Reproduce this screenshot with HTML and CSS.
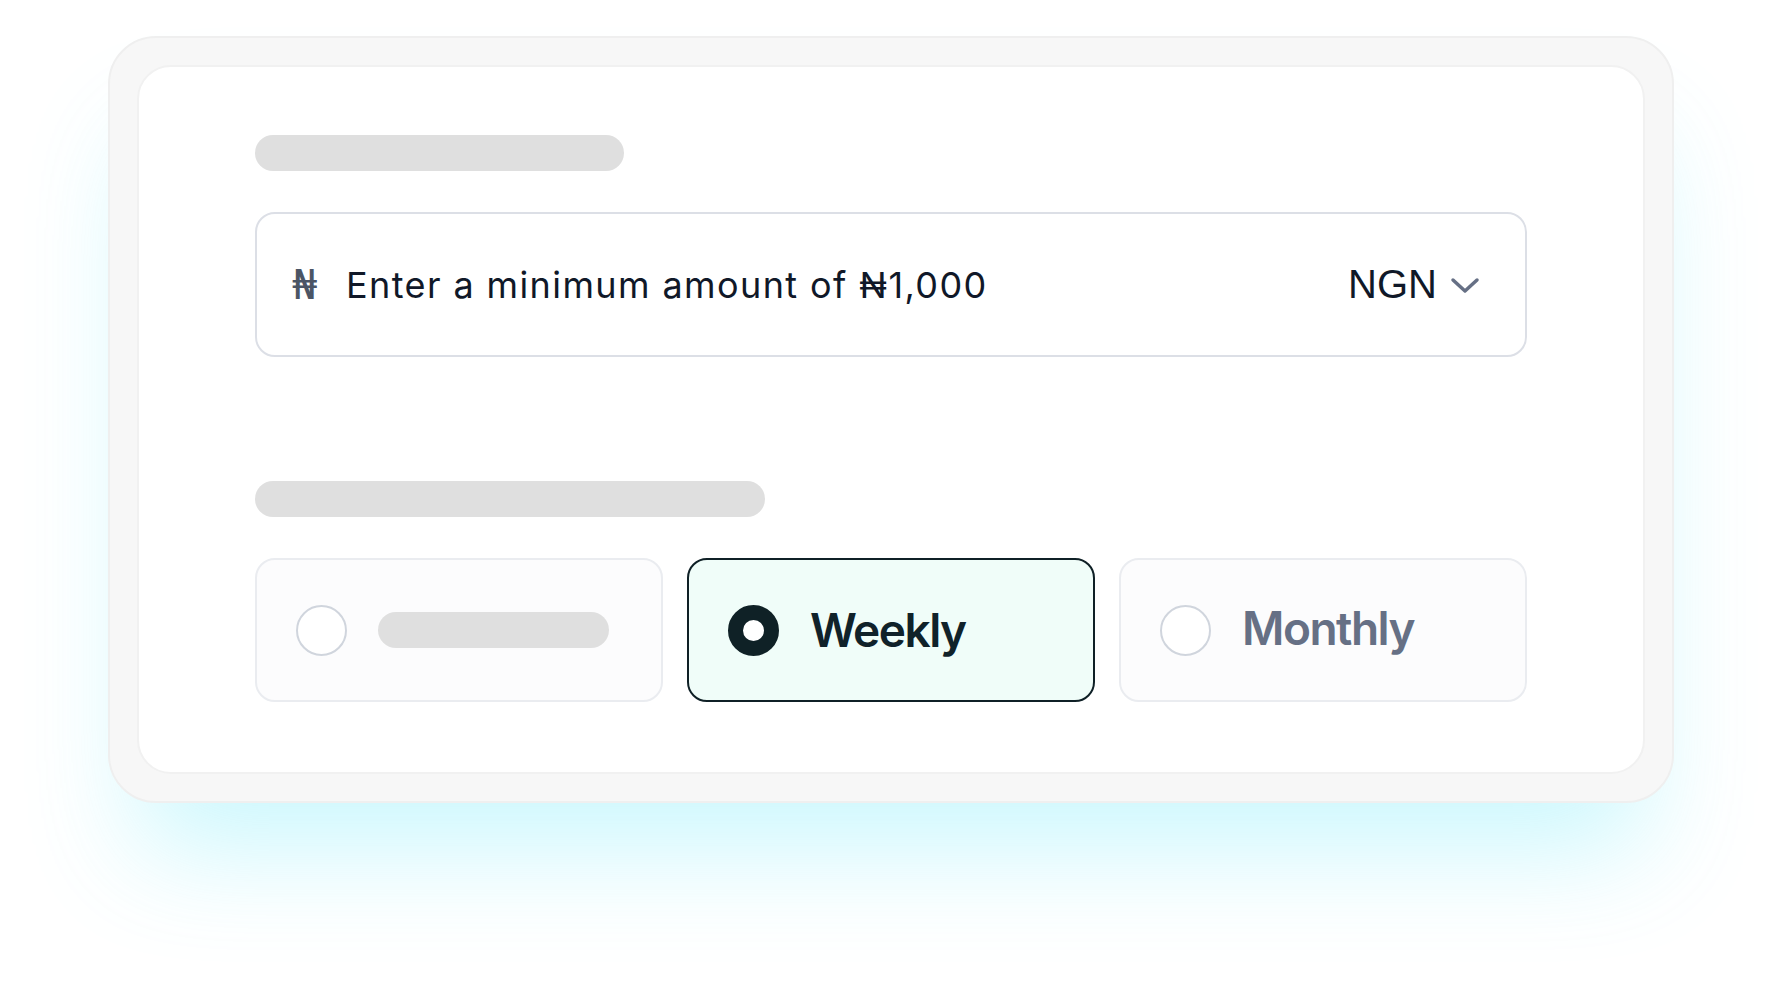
FILE: index.html
```html
<!DOCTYPE html>
<html lang="en">
<head>
<meta charset="utf-8">
<title>Savings plan</title>
<link rel="stylesheet" href="styles.css">
</head>
<body>
<main class="page">
  <section class="frame">
    <div class="card">
      <div class="skeleton skeleton-label-1"></div>
      <div class="amount-input">
        <span class="naira-icon">₦</span>
        <span class="placeholder">Enter a minimum amount of ₦1,000</span>
        <span class="currency">
          <span class="currency-code">NGN</span>
          <svg class="chevron" width="30" height="18" viewBox="0 0 30 18" aria-hidden="true">
            <polyline points="3,3 15,14 27,3" fill="none" stroke="#667085" stroke-width="3.5" stroke-linecap="round" stroke-linejoin="round"/>
          </svg>
        </span>
      </div>
      <div class="skeleton skeleton-label-2"></div>
      <div class="options">
        <div class="option">
          <span class="radio"></span>
          <span class="skeleton skeleton-option"></span>
        </div>
        <div class="option option-selected">
          <span class="radio radio-checked"></span>
          <span class="option-label">Weekly</span>
        </div>
        <div class="option">
          <span class="radio"></span>
          <span class="option-label option-label-muted">Monthly</span>
        </div>
      </div>
    </div>
  </section>
</main>
</body>
</html>
```

FILE: styles.css
```css
html, body {
  margin: 0;
  padding: 0;
  background: #ffffff;
}

body {
  font-family: "Inter", "Liberation Sans", sans-serif;
  width: 1782px;
  height: 984px;
  overflow: hidden;
}

.page {
  padding: 36px 0 0 108px;
}

.frame {
  box-sizing: border-box;
  width: 1566px;
  height: 767px;
  padding: 27px;
  background: #f7f7f7;
  border: 2px solid #efefef;
  border-radius: 48px;
  box-shadow: 0 75px 110px -30px rgba(80, 230, 250, 0.3);
}

.card {
  box-sizing: border-box;
  height: 100%;
  background: #ffffff;
  border: 2px solid #f1f1f1;
  border-radius: 34px;
  padding: 68px 116px 0 116px;
  display: flex;
  flex-direction: column;
}

.skeleton {
  display: block;
  background: #dfdfdf;
  border-radius: 18px;
  height: 36px;
}

.skeleton-label-1 {
  width: 369px;
}

.skeleton-label-2 {
  width: 510px;
  margin-top: 124px;
}

.skeleton-option {
  width: 231px;
  flex: none;
}

.amount-input {
  box-sizing: border-box;
  margin-top: 41px;
  height: 145px;
  border: 2px solid #dcdfe6;
  border-radius: 20px;
  display: flex;
  align-items: center;
  padding: 0 45px 0 35px;
}

.naira-icon {
  font-family: "DejaVu Sans", sans-serif;
  font-size: 40px;
  color: #4b5565;
  width: 32px;
  margin-right: 22px;
  line-height: 1;
}

.placeholder {
  font-family: "Inter", sans-serif;
  font-size: 36px;
  letter-spacing: 1.4px;
  color: #101828;
  flex: 1;
  white-space: nowrap;
}

.currency {
  display: flex;
  align-items: center;
  gap: 13px;
}

.currency-code {
  font-family: "Liberation Sans", sans-serif;
  font-size: 40px;
  color: #101828;
}

.chevron {
  display: block;
  margin-top: 2px;
}

.options {
  margin-top: 41px;
  display: grid;
  grid-template-columns: repeat(3, 1fr);
  gap: 24px;
}

.option {
  box-sizing: border-box;
  height: 144px;
  border: 2px solid #eaecf0;
  background: #fcfcfd;
  border-radius: 20px;
  display: flex;
  align-items: center;
  gap: 31px;
  padding-left: 39px;
}

.option-selected {
  border-color: #0f2026;
  background: #f0fdf9;
}

.radio {
  box-sizing: border-box;
  width: 51px;
  height: 51px;
  flex: none;
  border-radius: 50%;
  border: 2px solid #d0d5dd;
  background: #ffffff;
}

.radio-checked {
  border: 15.5px solid #0f2126;
}

.option-label {
  font-family: "Inter", sans-serif;
  font-weight: 600;
  font-size: 46px;
  letter-spacing: -1.5px;
  color: #10222a;
  line-height: 1;
}

.option-label-muted {
  color: #667085;
  margin-top: -4px;
}
```
